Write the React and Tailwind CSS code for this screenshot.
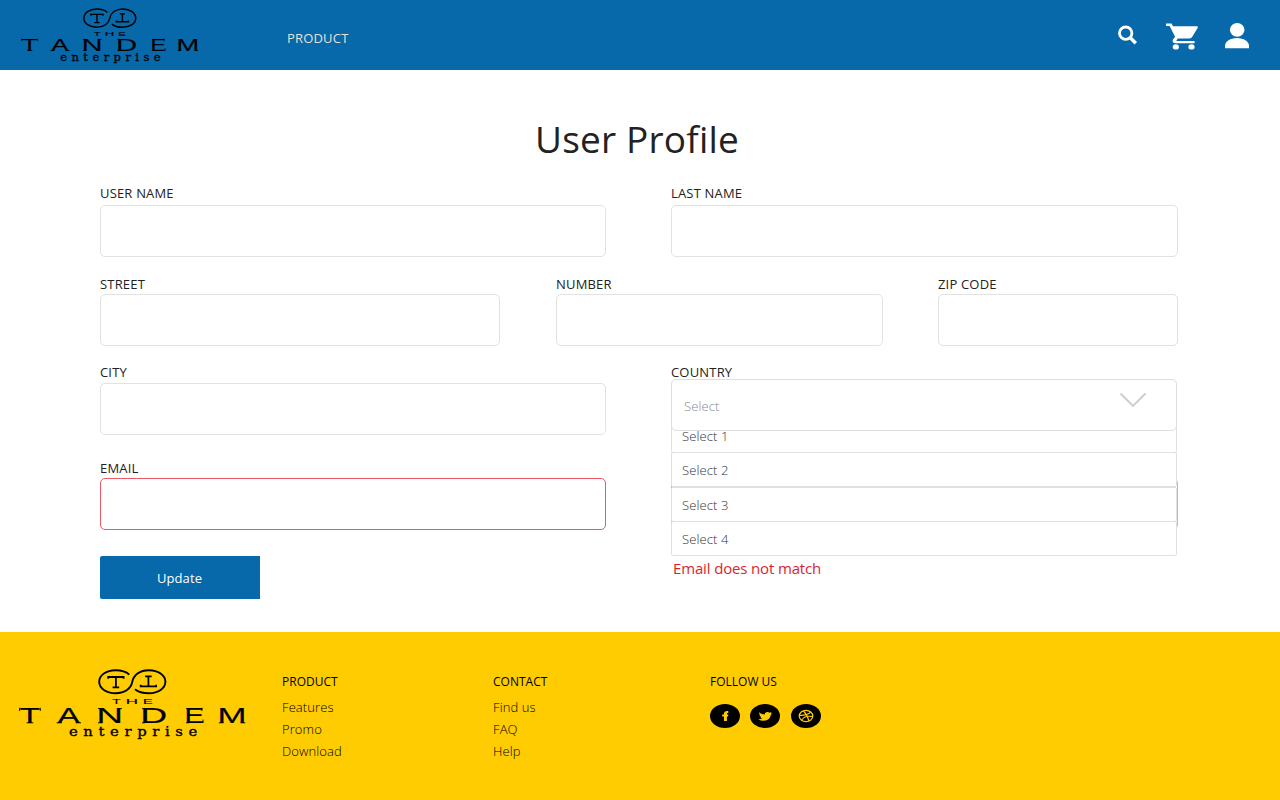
import React from 'react';

function Logo({ className }) {
  const tandem = [
    ['T', 9.6, 20.6],
    ['A', 47.6, 22.2],
    ['N', 86.6, 26.5],
    ['D', 130.3, 27],
    ['E', 174.4, 19.6],
    ['M', 207.6, 29],
  ];
  const the = [
    ['T', 102.3, 8.3],
    ['H', 115.8, 12.2],
    ['E', 133, 9.6],
  ];
  return (
    <svg viewBox="0 0 240 90" preserveAspectRatio="none" className={className} fill="#000" fontFamily="'Liberation Sans', Arial, sans-serif">
      <path
        d="M119.3 14.6C116 11.5 111 10.2 105.5 10.2C96.3 10.2 89.2 15.4 89.2 21.8C89.2 28.3 96.3 33.3 105.5 33.3C115 33.3 121 28.5 122.3 21.8C123.6 15.1 129.5 10.2 139 10.2C148.2 10.2 155.4 15.4 155.4 21.8C155.4 28.3 148.2 33.3 139 33.3C133 33.3 128 32 125 29.3"
        fill="none"
        stroke="#000"
        strokeWidth="1.9"
      />
      <path d="M98.2 18.8V17H113.6V18.8M105.9 17V27.4M102.6 27.4H109.2" fill="none" stroke="#000" strokeWidth="1.8" />
      <path d="M130.7 24.8V26.4H146.1V24.8M138.4 26.4V16.3M135.1 16.3H141.7" fill="none" stroke="#000" strokeWidth="1.8" />
      {the.map(([c, x, w]) => (
        <text key={c} x={x} y="43.8" fontSize="7.8" textLength={w} lengthAdjust="spacingAndGlyphs" stroke="#000" strokeWidth="0.15">
          {c}
        </text>
      ))}
      {tandem.map(([c, x, w]) => (
        <text key={c} x={x} y="63.2" fontSize="21.6" textLength={w} lengthAdjust="spacingAndGlyphs" stroke="#000" strokeWidth="0.15">
          {c}
        </text>
      ))}
      {/* small serifs at the ends of the wordmark's strokes */}
      <path
        d="M9.6 47.8V51M30.3 47.8V51M16.6 62.8H23.4M46.6 62.8H52M65.6 62.8H71M88 48.6H91M88 62.8H92.4M107.6 48.6H112M132 48.6H135M132 62.8H135M176 48.6H179M176 62.8H179M191.8 47.8V51M193 59.6V63M208.8 62.8H213.4M230.6 62.8H235.3"
        fill="none"
        stroke="#000"
        strokeWidth="0.9"
      />
      <g transform="translate(59 76) scale(1.12 1)">
        <text x="0" y="0" fontSize="13.2" fontFamily="'DejaVu Serif', serif" textLength="114.5" stroke="#000" strokeWidth="0.35">
          enterprise
        </text>
      </g>
    </svg>
  );
}

function Field({ label, className = '', boxClass = '', labelClass = 'h-[20px]' }) {
  return (
    <label className={`block ${className}`}>
      <span className={`block text-[13px] leading-[18px] tracking-[0.18px] whitespace-nowrap ${labelClass}`}>{label}</span>
      <input className={`block w-full rounded-[5px] border bg-white px-3 text-[13px] outline-none ${boxClass}`} />
    </label>
  );
}

function Header() {
  return (
    <header className="flex h-[70px] items-start bg-[#0768aa] text-white">
      <Logo className="mt-[0.6px] ml-[14px] h-[71px] w-[188px] shrink-0" />
      <a className="mt-[29px] ml-[85px] text-[13px] leading-[18px] tracking-[0.18px] text-[#e6e0d8]">PRODUCT</a>
      <div className="mt-[22px] mr-[30px] ml-auto flex items-start">
        <svg viewBox="0 0 20 20" className="mt-[3px] h-5 w-5" fill="none" stroke="#fff">
          <circle cx="8.7" cy="8.2" r="6.2" strokeWidth="2.8" />
          <path d="M13.1 12.500L18.800 18.200" strokeWidth="3.5" />
        </svg>
        <svg viewBox="0 0 32 28" className="ml-[29px] h-7 w-8" fill="#fff">
          <path d="M0 1.5H5.6L7 4.2H30.6C31.7 4.2 32.2 5 31.6 6L26.1 15C25.6 15.9 24.7 16.4 23.5 16.4H11.9L10.5 18.3C10.3 18.7 10.5 18.9 10.9 18.9H28.6V21.2H9.6C7.2 21.2 5.9 19.4 7 17.6L9.1 14.7L3.6 3.9H0Z" />
          <ellipse cx="9.8" cy="24.9" rx="3.1" ry="2.7" />
          <ellipse cx="25.5" cy="24.9" rx="3.1" ry="2.7" />
        </svg>
        <svg viewBox="0 0 26 27" className="ml-[26px] h-[27px] w-[26px]" fill="#fff">
          <ellipse cx="13.2" cy="7.8" rx="7.3" ry="6.9" />
          <path d="M1 26.2V23.7C1 19.5 6.4 15.9 13 15.9S25 19.5 25 23.7V26.2Z" />
        </svg>
      </div>
    </header>
  );
}

function CountrySelect() {
  return (
    <div className="relative w-[506px] text-[13px]">
      <div className="h-[16px] leading-[18px] tracking-[0.18px] text-[#222]">COUNTRY</div>
      <div className="absolute top-[60px] left-0 z-10 w-[506px] leading-[18px] font-light tracking-[0.1px] text-[#333]">
        <div className="h-[30px] rounded-b-[2px] border border-[#e0e0e0] bg-white px-[10px] pt-[3px]">Select 1</div>
        <div className="mt-[-1px] h-[35px] rounded-[2px] border border-[#e0e0e0] bg-white px-[10px] pt-[8px]">Select 2</div>
        <div className="h-[35px] rounded-[2px] border border-[#e0e0e0] bg-white px-[10px] pt-[8px]">Select 3</div>
        <div className="mt-[-1px] h-[35px] rounded-[2px] border border-[#e0e0e0] bg-white px-[10px] pt-[8px]">Select 4</div>
      </div>
      <div className="relative z-20 flex h-[52px] items-start justify-between rounded-[5px] border border-[#dedede] bg-white pr-[29px] pl-3">
        <span className="mt-[17px] leading-[18px] font-light tracking-[0.1px] text-[#888]">Select</span>
        <svg viewBox="0 0 28 16" className="mt-[12px] h-4 w-7" fill="none" stroke="#ccc" strokeWidth="1.8">
          <path d="M1.5 1.5L14 14L26.5 1.5" />
        </svg>
      </div>
    </div>
  );
}

function LinkColumn({ title, links, className }) {
  return (
    <div className={className}>
      <div className="text-[12px] leading-[18px]">{title}</div>
      <ul className="mt-[5px] text-[13px] leading-[22px] font-light tracking-[0.1px]">
        {links.map((l) => (
          <li key={l}>{l}</li>
        ))}
      </ul>
    </div>
  );
}

function Footer() {
  return (
    <footer className="flex h-[168px] items-start bg-[#ffcc01] text-black">
      <Logo className="mt-[28px] ml-[10px] h-[90px] w-[240px] shrink-0" />
      <LinkColumn className="mt-[41px] ml-[32px] w-[211px]" title="PRODUCT" links={['Features', 'Promo', 'Download']} />
      <LinkColumn className="mt-[41px] w-[217px]" title="CONTACT" links={['Find us', 'FAQ', 'Help']} />
      <div className="mt-[41px]">
        <div className="text-[12px] leading-[18px]">FOLLOW US</div>
        <div className="mt-[13px] flex">
          <svg viewBox="0 0 30 24" className="h-6 w-[30px]">
            <ellipse cx="15" cy="12" rx="15" ry="12" />
            <path d="M14 17V12.6H12.2V10.4H14V9.6C14 7.7 15.2 6.9 17 6.9H18.3V8.9H17.6C17 8.9 16.9 9.1 16.9 9.6V10.4H18.3L18 12.6H16.9V17Z" fill="#ffcc01" />
          </svg>
          <svg viewBox="0 0 30 24" className="ml-[10px] h-6 w-[30px]">
            <ellipse cx="15" cy="12" rx="15" ry="12" />
            <path d="M9.3 8.3C10.8 9.9 12.6 10.5 14.7 10.6C14.6 9 15.9 7.9 17.4 7.9C18.3 7.9 19 8.2 19.5 8.8L21.5 8.1L20.8 9.7L22.3 9.6L20.7 11.1C20.3 14.5 17.8 16.7 13.9 16.7C11.9 16.7 10 16.2 8.3 15.2C10 15.3 11.4 15 12.4 14.3C11.2 14.2 10.5 13.6 10.2 12.7H11.2C10 12.2 9.4 11.5 9.4 10.5L10.2 10.7C9.3 10 9 9.2 9.3 8.3Z" fill="#ffcc01" />
          </svg>
          <svg viewBox="0 0 30 24" className="ml-[11px] h-6 w-[30px]">
            <ellipse cx="15" cy="12" rx="15" ry="12" />
            <g fill="none" stroke="#ffcc01" strokeWidth="1.2">
              <ellipse cx="15" cy="12" rx="6.8" ry="5.7" />
              <path d="M8.3 11.3C13 11.5 17.5 10.4 19.8 7.8M10.5 16.2C12.5 13 16.5 11.5 21.7 12.7M12.4 6.8C15.3 9.7 17 13 17.9 17" />
            </g>
          </svg>
        </div>
      </div>
    </footer>
  );
}

export default function App() {
  return (
    <div className="flex min-h-[800px] w-full flex-col bg-white font-['Open_Sans',sans-serif] text-[#222]">
      <Header />
      <main className="h-[562px] pr-[102px] pl-[100px]">
        <h1 className="pt-[43px] pr-[4px] text-center text-[37px] leading-[52px] tracking-[0.2px] text-[#222]">User Profile</h1>
        <div className="mt-[19px] flex justify-between">
          <Field label="USER NAME" className="w-[506px]" labelClass="h-[21px]" boxClass="h-[52px] border-[#e2e2e2]" />
          <Field label="LAST NAME" className="w-[507px]" labelClass="h-[21px]" boxClass="h-[52px] border-[#e2e2e2]" />
        </div>
        <div className="mt-[18px] flex">
          <Field label="STREET" className="w-[400px]" labelClass="h-[19px]" boxClass="h-[52px] border-[#e2e2e2]" />
          <Field label="NUMBER" className="ml-[56px] w-[327px]" labelClass="h-[19px]" boxClass="h-[52px] border-[#e2e2e2]" />
          <Field label="ZIP CODE" className="ml-auto w-[240px]" labelClass="h-[19px]" boxClass="h-[52px] border-[#e2e2e2]" />
        </div>
        <div className="mt-[17px] flex h-[72px] justify-between pr-[1px]">
          <Field label="CITY" className="w-[506px]" boxClass="h-[52px] border-[#e2e2e2]" />
          <CountrySelect />
        </div>
        <div className="mt-[24px] flex items-end justify-between">
          <Field label="EMAIL" className="w-[506px]" labelClass="h-[19px]" boxClass="h-[52px] border-[#ec5a66]" />
          <input className="h-[52px] w-[507px] rounded-[5px] border border-[#f0a3aa] outline-none" />
        </div>
        <div className="mt-[26px] flex items-start justify-between">
          <button className="h-[43px] w-[160px] rounded-l-[2px] bg-[#0768aa] pt-[3px] pr-[1px] text-[13px] tracking-[0.1px] text-white">Update</button>
          <p className="mt-[2px] w-[505px] text-[15px] leading-[20px] tracking-[-0.15px] text-[#dc1e2d]">Email does not match</p>
        </div>
      </main>
      <Footer />
    </div>
  );
}
